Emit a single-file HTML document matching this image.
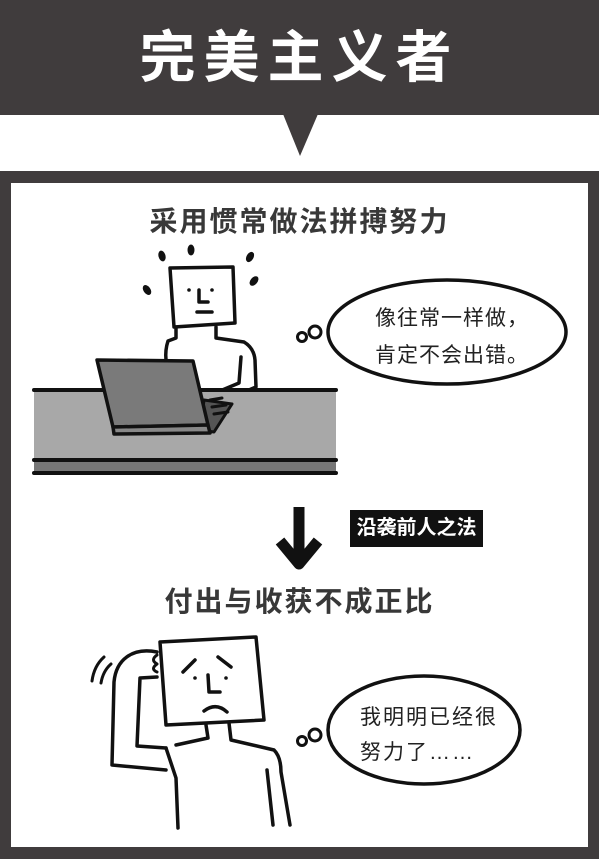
<!DOCTYPE html>
<html><head><meta charset="utf-8"><style>
html,body{margin:0;padding:0;}
body{width:599px;height:859px;position:relative;background:#403c3d;overflow:hidden;font-family:"Liberation Sans","Noto Sans CJK SC",sans-serif;}
.t{position:absolute;left:0;width:599px;text-align:center;white-space:nowrap;}
</style></head><body>
<div style="position:absolute;left:0;top:115px;width:599px;height:56px;background:#fff"></div>
<div style="position:absolute;left:11px;top:183px;width:577px;height:664px;background:#fff"></div>
<div class="t" style="top:20px;font-size:56px;font-weight:bold;color:#fff;letter-spacing:8px;line-height:76px">完美主义者</div>
<div class="t" style="top:204px;font-size:28px;font-weight:bold;color:#383838;letter-spacing:2px;line-height:36px">采用惯常做法拼搏努力</div>
<div class="t" style="top:584px;font-size:28px;font-weight:bold;color:#383838;letter-spacing:2px;line-height:36px">付出与收获不成正比</div>
<div style="position:absolute;left:350px;top:510px;width:133px;height:37px;background:#111;color:#fff;font-size:20px;font-weight:bold;line-height:37px;text-align:center">沿袭前人之法</div>
<svg width="599" height="859" style="position:absolute;left:0;top:0" fill="none" stroke="#111" stroke-width="3.5" stroke-linecap="round" stroke-linejoin="round">
<polygon points="283,114 318,114 300,156" fill="#403c3d" stroke="none"/>
<path d="M299,507 L299,562 M280,541 L299,564 L318,541" stroke-width="11" stroke-linecap="butt"/>
<path d="M176,327 L176,338 L168,341 Q165,350 166,360"/>
<path d="M216,327 L216,338 L244,342 Q254,348 255,360 L256,387 L230,398"/>
<path d="M241,357 L239,383 L208,396"/>
<rect x="34" y="390" width="302" height="70" fill="#a8a8a8" stroke="none"/>
<path d="M34,390 L336,390" stroke-width="4"/>
<rect x="34" y="460" width="302" height="13" fill="#777" stroke="none"/>
<path d="M34,460 L336,460 M34,473 L336,473" stroke-width="4"/>
<path d="M204,400 L232,404 L214,432 L200,430 Z" fill="#555" stroke-width="3"/>
<path d="M97,360 L193,361 L208,425 L113,427 Z" fill="#7a7a7a"/>
<path d="M113,427 L208,425 L210,433 L114,434 Z" fill="#888"/>
<path d="M210,400 L222,398 M212,407 L226,405 M214,414 L228,412" stroke-width="3"/>
<path d="M170,268 L233,267 L235,323 L174,327 Z" fill="#fff"/>
<circle cx="189" cy="290" r="1.8" fill="#111" stroke="none"/>
<circle cx="212" cy="290" r="1.8" fill="#111" stroke="none"/>
<path d="M199,290 L199,302 L208,302 M197,312 L212,312"/>
<g fill="#111" stroke="none">
<ellipse cx="162" cy="256" rx="3.5" ry="5.5" transform="rotate(-15 162 256)"/>
<ellipse cx="191" cy="250" rx="3.5" ry="5.5"/>
<ellipse cx="250" cy="257" rx="3.5" ry="5.5" transform="rotate(30 250 257)"/>
<ellipse cx="147" cy="290" rx="3.5" ry="5.5" transform="rotate(-35 147 290)"/>
<ellipse cx="254" cy="281" rx="3.5" ry="5.5" transform="rotate(40 254 281)"/>
</g>
<ellipse cx="447" cy="332" rx="119" ry="52" fill="#fff"/>
<circle cx="302" cy="337" r="4.5" stroke-width="3"/>
<circle cx="315" cy="332" r="6" stroke-width="3"/>
<path d="M157,652 C132,647 116,660 114,682 L112,765 L166,770"/>
<path d="M157,677 L140,678 L137,746 L166,748"/>
<path d="M166,748 L176,778 L178,828"/>
<path d="M206,725 L208,738 L176,745"/>
<path d="M229,723 L231,740 L274,750 Q281,757 281,772 L290,825 M267,770 L273,825"/>
<path d="M160,642 L256,637 L264,720 L166,725 Z" fill="#fff"/>
<path d="M157,655 Q150,660 157,664 M157,664 Q150,669 157,672" stroke-width="3"/>
<path d="M183,672 L195,660 M218,657 L231,667"/>
<circle cx="195" cy="678" r="1.8" fill="#111" stroke="none"/>
<circle cx="226" cy="678" r="1.8" fill="#111" stroke="none"/>
<path d="M208,675 L209,692 L220,692 M204,711 Q216,702 227,712"/>
<path d="M92,681 Q94,666 104,657 M101,683 Q103,671 111,664" stroke-width="3"/>
<ellipse cx="424" cy="730" rx="96" ry="54" fill="#fff"/>
<circle cx="302" cy="741" r="4.5" stroke-width="3"/>
<circle cx="315" cy="735" r="6" stroke-width="3"/>
</svg>
<div style="position:absolute;left:375px;top:300px;font-size:21px;color:#222;line-height:37px;letter-spacing:1px;white-space:nowrap">像往常一样做，<br>肯定不会出错。</div>
<div style="position:absolute;left:360px;top:700px;font-size:21px;color:#222;line-height:35px;letter-spacing:2px;white-space:nowrap">我明明已经很<br>努力了……</div>
</body></html>
